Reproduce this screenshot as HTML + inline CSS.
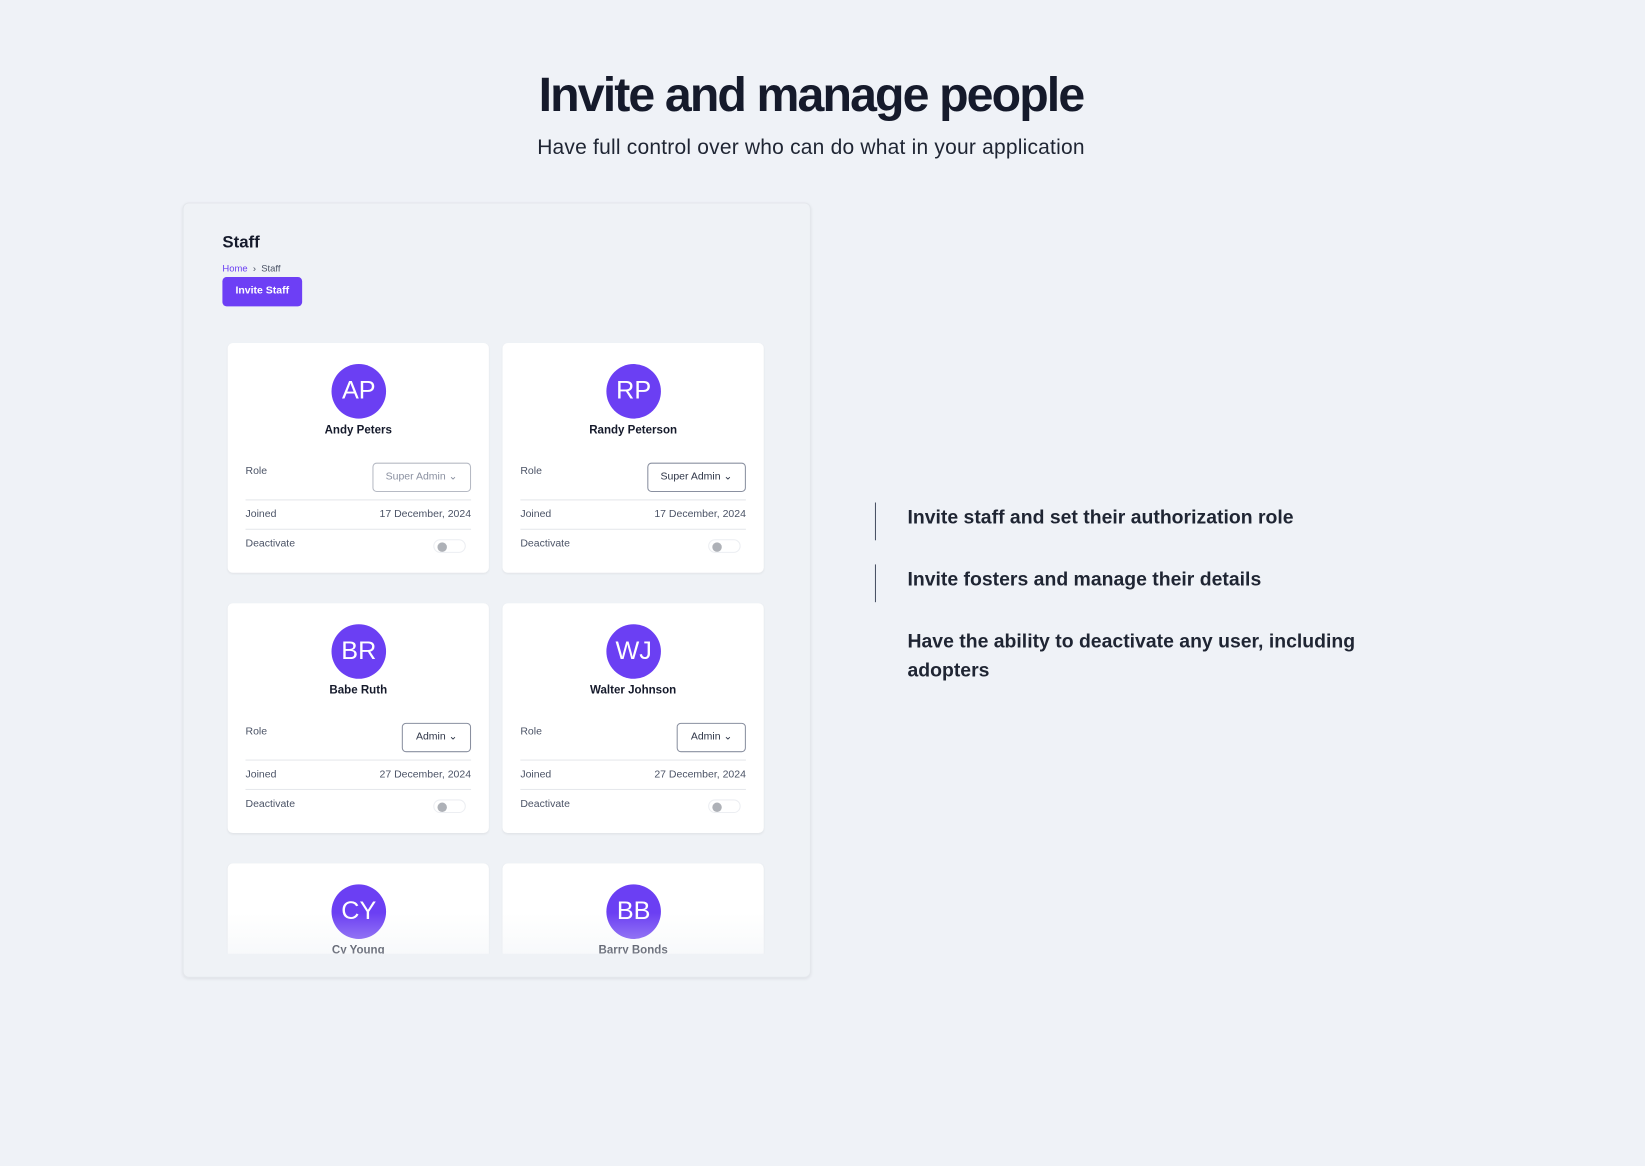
<!DOCTYPE html>
<html><head><meta charset="utf-8"><style>
*{box-sizing:border-box;margin:0;padding:0}
html,body{width:1645px;height:1166px;overflow:hidden;background:#eff2f7;font-family:"Liberation Sans",sans-serif;color:#1b1f2e}
#w{position:absolute;left:0;top:0;width:1568px;height:1111px;transform:scale(1.0491);transform-origin:0 0}
.a{position:absolute}
h1{position:absolute;left:0;width:1546px;text-align:center;top:63px;font-size:46px;font-weight:bold;letter-spacing:-1.8px;color:#151a2b}
.sub{position:absolute;left:0;width:1546px;text-align:center;top:130px;font-size:20px;color:#1f2533;letter-spacing:.2px}
.panel{left:174px;top:193px;width:599px;height:739px;background:#eff2f6;border:1px solid #e4e7ec;border-radius:6px;box-shadow:0 1px 3px rgba(0,0,0,.08)}
.clip{left:197px;top:300px;width:553px;height:609px;overflow:hidden}
.card{position:absolute;width:249px;height:219px;background:#fff;border-radius:5px;box-shadow:0 1px 2px rgba(0,0,0,.06)}
.av{position:absolute;left:99px;top:20px;width:52px;height:52px;border-radius:50%;background:#6b3ff3;color:#fff;font-size:24px;text-align:center;line-height:52px}
.nm{position:absolute;left:0;width:249px;text-align:center;top:77px;font-size:11px;font-weight:bold;color:#151a2b}
.lb{position:absolute;left:17px;font-size:10px;color:#4b5366}
.vl{position:absolute;right:17px;font-size:10px;color:#4b5366}
.ln{position:absolute;left:17px;right:17px;height:1px;background:#e5e7eb}
.sel{position:absolute;right:17px;top:114px;height:28px;border:1px solid #8a90a0;border-radius:4px;font-size:10px;line-height:26px;padding:0 12px;color:#2e3547}
.tg{position:absolute;left:196px;top:187px;width:31px;height:13px;border-radius:7px;border:1px solid #eceef2;background:#fff}
.tg:after{content:"";position:absolute;left:3px;top:2px;width:9px;height:9px;border-radius:50%;background:#aeb1b7}
.fade{left:0;top:570px;width:553px;height:39px;background:linear-gradient(rgba(239,242,246,0),rgba(239,242,246,.45))}
.bar{position:absolute;left:834px;width:1px;height:36px;background:#4b5366}
.ft{position:absolute;left:865px;font-size:18.5px;font-weight:bold;color:#1f2533;line-height:28px;width:450px}
</style></head><body><div id="w">
<h1>Invite and manage people</h1>
<div class="sub">Have full control over who can do what in your application</div>
<div class="a panel"></div>
<div class="a" style="left:212px;top:223px;font-size:16px;font-weight:bold;color:#151a2b">Staff</div>
<div class="a" style="left:212px;top:251px;font-size:9px;color:#4b5366"><span style="color:#6b3ff3">Home</span> &nbsp;›&nbsp; Staff</div>
<div class="a" style="left:212px;top:264px;width:76px;height:28px;background:#6d3ff5;border-radius:4px;color:#fff;font-size:10px;font-weight:bold;text-align:center;line-height:28px">Invite Staff</div>
<div class="a clip">
<div class="card" style="left:20px;top:27px"><div class="av">AP</div><div class="nm">Andy Peters</div>
<div class="lb" style="top:117px">Role</div><div class="sel" style="color:#8a90a0;border-color:#b6bac4">Super Admin ⌄</div><div class="ln" style="top:149px"></div>
<div class="lb" style="top:158px">Joined</div><div class="vl" style="top:158px">17 December, 2024</div><div class="ln" style="top:177px"></div>
<div class="lb" style="top:186px">Deactivate</div><div class="tg"></div></div>
<div class="card" style="left:282px;top:27px"><div class="av">RP</div><div class="nm">Randy Peterson</div>
<div class="lb" style="top:117px">Role</div><div class="sel">Super Admin ⌄</div><div class="ln" style="top:149px"></div>
<div class="lb" style="top:158px">Joined</div><div class="vl" style="top:158px">17 December, 2024</div><div class="ln" style="top:177px"></div>
<div class="lb" style="top:186px">Deactivate</div><div class="tg"></div></div>
<div class="card" style="left:20px;top:275px"><div class="av">BR</div><div class="nm">Babe Ruth</div>
<div class="lb" style="top:117px">Role</div><div class="sel">Admin ⌄</div><div class="ln" style="top:149px"></div>
<div class="lb" style="top:158px">Joined</div><div class="vl" style="top:158px">27 December, 2024</div><div class="ln" style="top:177px"></div>
<div class="lb" style="top:186px">Deactivate</div><div class="tg"></div></div>
<div class="card" style="left:282px;top:275px"><div class="av">WJ</div><div class="nm">Walter Johnson</div>
<div class="lb" style="top:117px">Role</div><div class="sel">Admin ⌄</div><div class="ln" style="top:149px"></div>
<div class="lb" style="top:158px">Joined</div><div class="vl" style="top:158px">27 December, 2024</div><div class="ln" style="top:177px"></div>
<div class="lb" style="top:186px">Deactivate</div><div class="tg"></div></div>
<div class="card" style="left:20px;top:523px"><div class="av">CY</div><div class="nm">Cy Young</div></div>
<div class="card" style="left:282px;top:523px"><div class="av">BB</div><div class="nm">Barry Bonds</div></div>
<div class="a fade"></div>
</div>
<div class="bar" style="top:479px"></div><div class="bar" style="top:538px"></div>
<div class="ft" style="top:479px">Invite staff and set their authorization role</div>
<div class="ft" style="top:538px">Invite fosters and manage their details</div>
<div class="ft" style="top:597px">Have the ability to deactivate any user, including adopters</div>
</div></body></html>
